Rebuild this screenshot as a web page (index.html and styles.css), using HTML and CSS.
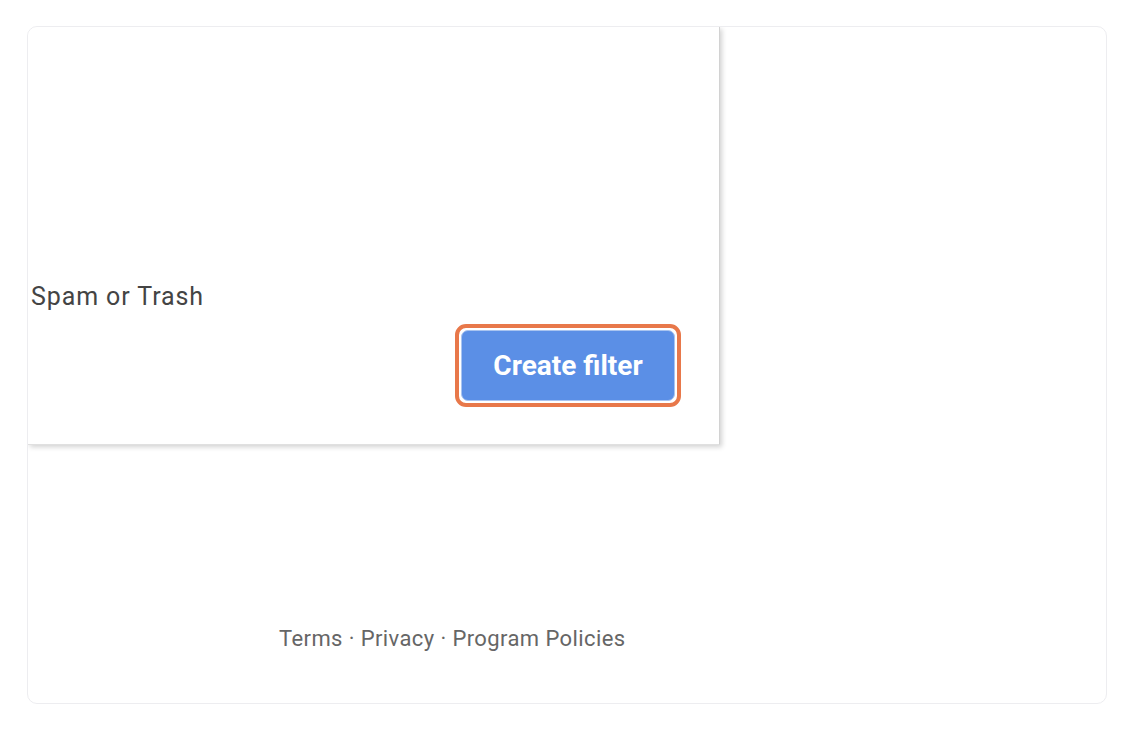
FILE: index.html
```html
<!DOCTYPE html>
<html lang="en">
<head>
  <meta charset="UTF-8">
  <meta name="viewport" content="width=device-width, initial-scale=1.0">
  <title>Create filter</title>
  <link rel="stylesheet" href="styles.css">
</head>
<body>
  <div class="frame">
    <!-- Filter dialog (clipped on the left) -->
    <div class="dialog">
      <p class="option-text">Spam or Trash</p>
      <div class="actions">
        <div class="highlight">
          <button type="button" class="create-btn">Create filter</button>
        </div>
      </div>
    </div>

    <!-- Footer -->
    <div class="footer">Terms · Privacy · Program Policies</div>
  </div>
</body>
</html>
```

FILE: styles.css
```css
* {
  margin: 0;
  padding: 0;
  box-sizing: border-box;
}

body {
  background: #fff;
  font-family: Roboto, 'Liberation Sans', sans-serif;
}

.frame {
  margin: 26px 0 0 27px;
  width: 1080px;
  height: 678px;
  border: 1.5px solid #ededf0;
  border-radius: 10px;
  overflow: hidden;
}

.dialog {
  width: 692px;
  height: 418px;
  background: #fff;
  border-right: 1px solid #d2d2d2;
  border-bottom: 1px solid #e0e0e0;
  box-shadow: 2px 2px 5px rgba(0, 0, 0, 0.18);
  padding-top: 255px;
}

.option-text {
  font-size: 25px;
  letter-spacing: 0.9px;
  color: #444;
  padding-left: 3px;
  line-height: 30px;
}

.actions {
  display: flex;
  justify-content: flex-end;
  padding-right: 38px;
  margin-top: 12px;
}

.highlight {
  border: 4px solid #e8784a;
  border-radius: 11px;
  padding: 2px;
  background: #fff;
}

.create-btn {
  display: block;
  width: 214px;
  height: 71px;
  background: #5b8fe6;
  color: #fff;
  border: 1px solid #a9c4f0;
  border-radius: 7px;
  font-family: Roboto, 'Liberation Sans', sans-serif;
  font-weight: 700;
  font-size: 28px;
  cursor: pointer;
}

.footer {
  margin-top: 181px;
  padding-left: 251px;
  font-size: 22px;
  letter-spacing: 0.4px;
  color: #666;
}
```
